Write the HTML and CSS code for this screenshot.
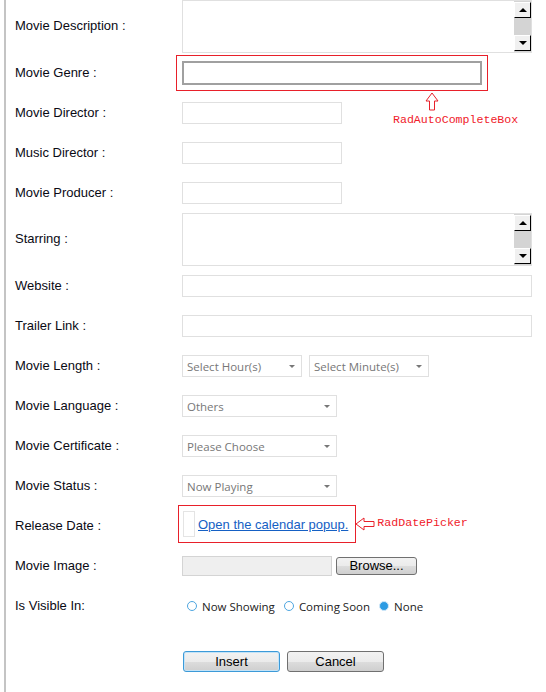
FILE: index.html
```html
<!DOCTYPE html>
<html>
<head>
	<title>Add Movie</title>
	<meta charset="utf-8">
	<link rel="stylesheet" href="styles.css">
</head>
<body>
<div id="container">

	<div class="row row-memo">
		<label>Movie Description :</label>
		<div class="memo">
			<div class="memo-text"></div>
			<div class="vscroll">
				<span class="sbtn up"></span>
				<span class="sbtn down"></span>
			</div>
		</div>
	</div>

	<div class="row">
		<label>Movie Genre :</label>
		<div class="mark mark-genre">
			<input type="text" class="autocomplete">
			<svg class="note-arrow arrow-up" width="14" height="20" viewBox="0 0 14 20">
				<polygon points="7,1 1,9 4.5,9 4.5,18 9.5,18 9.5,9 13,9" fill="#fff" stroke="#e8202a" stroke-width="1"/>
			</svg>
			<span class="note note-genre">RadAutoCompleteBox</span>
		</div>
	</div>

	<div class="row">
		<label>Movie Director :</label>
		<input type="text" class="txt">
	</div>

	<div class="row">
		<label>Music Director :</label>
		<input type="text" class="txt">
	</div>

	<div class="row">
		<label>Movie Producer :</label>
		<input type="text" class="txt">
	</div>

	<div class="row row-memo">
		<label>Starring :</label>
		<div class="memo">
			<div class="memo-text"></div>
			<div class="vscroll">
				<span class="sbtn up"></span>
				<span class="sbtn down"></span>
			</div>
		</div>
	</div>

	<div class="row">
		<label>Website :</label>
		<input type="text" class="txt txt-wide">
	</div>

	<div class="row">
		<label>Trailer Link :</label>
		<input type="text" class="txt txt-wide">
	</div>

	<div class="row">
		<label>Movie Length :</label>
		<div class="combo combo-short"><span>Select Hour(s)</span><i></i></div>
		<div class="combo combo-short"><span>Select Minute(s)</span><i></i></div>
	</div>

	<div class="row">
		<label>Movie Language :</label>
		<div class="combo"><span>Others</span><i></i></div>
	</div>

	<div class="row">
		<label>Movie Certificate :</label>
		<div class="combo"><span>Please Choose</span><i></i></div>
	</div>

	<div class="row">
		<label>Movie Status :</label>
		<div class="combo"><span>Now Playing</span><i></i></div>
	</div>

	<div class="row">
		<label>Release Date :</label>
		<div class="mark mark-date">
			<span class="date-input"></span>
			<a href="#" class="popup-link">Open the calendar popup.</a>
			<svg class="note-arrow arrow-left" width="20" height="14" viewBox="0 0 20 14">
				<polygon points="1,7 9,1 9,4.5 19,4.5 19,9.5 9,9.5 9,13" fill="#fff" stroke="#e8202a" stroke-width="1"/>
			</svg>
			<span class="note note-date">RadDatePicker</span>
		</div>
	</div>

	<div class="row">
		<label>Movie Image :</label>
		<span class="file-box"></span>
		<button class="btn btn-browse">Browse...</button>
	</div>

	<div class="row">
		<label>Is Visible In:</label>
		<div class="radios">
			<span class="opt"><span class="dot"></span>Now Showing</span>
			<span class="opt"><span class="dot"></span>Coming Soon</span>
			<span class="opt"><span class="dot on"></span>None</span>
		</div>
	</div>

	<div id="botones">
		<button class="btn btn-main btn-focus">Insert</button>
		<button class="btn btn-main">Cancel</button>
	</div>

</div>
</body>
</html>
```

FILE: styles.css
```css
body {
	margin: 0;
	background-color: #fff;
	font-family: "Liberation Sans", Arial, sans-serif;
	font-size: 13px;
	color: #000;
}
#container {
	margin-left: 4px;
	border-left: 2px solid #c4c4c4;
	padding-left: 9px;
	min-height: 692px;
	box-sizing: border-box;
}
.row {
	display: flex;
	align-items: center;
	height: 40px;
}
.row > label {
	width: 167px;
	flex: none;
	padding-bottom: 2px;
	color: #0a0a14;
}
.row-memo {
	height: 53px;
}

/* text inputs */
.txt {
	box-sizing: border-box;
	width: 160px;
	height: 22px;
	margin: 0;
	border: 1px solid #e0e0e0;
	padding: 0 4px;
	outline: none;
}
.txt-wide {
	width: 350px;
}

/* multi line box with the old style scrollbar */
.memo {
	box-sizing: border-box;
	width: 350px;
	height: 53px;
	border: 1px solid #e0e0e0;
	display: flex;
}
.memo-text {
	flex: 1;
}
.vscroll {
	width: 17px;
	background-color: #d4d4d4;
	display: flex;
	flex-direction: column;
	justify-content: space-between;
	padding: 1px 0;
}
.sbtn {
	box-sizing: border-box;
	display: flex;
	align-items: center;
	justify-content: center;
	height: 16px;
	background-color: #f0f0f0;
	border-top: 1px solid #fff;
	border-left: 1px solid #fff;
	border-right: 1px solid #000;
	border-bottom: 1px solid #000;
}
.sbtn::after {
	content: "";
	border-left: 4px solid transparent;
	border-right: 4px solid transparent;
}
.sbtn.up::after {
	border-bottom: 4px solid #000;
}
.sbtn.down::after {
	border-top: 4px solid #000;
}

/* red marks with notes */
.mark {
	position: relative;
	border: 1px solid #e8202a;
}
.mark-genre {
	margin-left: -6px;
	padding: 5px;
	display: flex;
}
.autocomplete {
	box-sizing: border-box;
	width: 300px;
	height: 24px;
	margin: 0;
	border: 2px solid #a0a0a0;
	outline: none;
}
.note-arrow {
	position: absolute;
}
.arrow-up {
	left: 248px;
	top: 36px;
}
.note {
	position: absolute;
	font-family: "Liberation Mono", "DejaVu Sans Mono", monospace;
	font-size: 11.6px;
	color: #f0202a;
	white-space: nowrap;
}
.note-genre {
	left: 216px;
	top: 57px;
}
.mark-date {
	margin-left: -4px;
	margin-bottom: 4px;
	padding: 5px 7px 5px 4px;
	display: flex;
	align-items: center;
}
.date-input {
	box-sizing: border-box;
	width: 12px;
	height: 26px;
	border: 1px solid #e4e4e4;
}
.popup-link {
	margin-left: 3px;
	color: #1560c4;
	text-decoration: underline;
}
.arrow-left {
	left: 100%;
	top: 11px;
}
.note-date {
	left: calc(100% + 22px);
	top: 10px;
}

/* drop downs */
.combo {
	box-sizing: border-box;
	width: 155px;
	height: 22px;
	border: 1px solid #e0e0e0;
	display: flex;
	align-items: center;
	justify-content: space-between;
	padding: 0 6px 0 4px;
	font-family: "Open Sans", sans-serif;
	font-size: 11.5px;
	color: #777;
}
.combo-short {
	width: 120px;
	margin-right: 7px;
}
.combo i {
	border-left: 3px solid transparent;
	border-right: 3px solid transparent;
	border-top: 3px solid #777;
}

/* file upload */
.file-box {
	box-sizing: border-box;
	width: 150px;
	height: 20px;
	background-color: #efefef;
	border: 1px solid #d4d4d4;
}

/* radio buttons */
.radios {
	display: flex;
	padding-left: 5px;
	font-family: "Open Sans", sans-serif;
	font-size: 11.5px;
	color: #222;
}
.opt {
	display: flex;
	align-items: center;
	margin-right: 9px;
}
.dot {
	box-sizing: border-box;
	width: 10px;
	height: 10px;
	margin-right: 5px;
	border: 1.5px solid #4ea6e0;
	border-radius: 50%;
}
.dot.on {
	background-color: #2c9be3;
	border-color: #cfe7f8;
}

/* buttons */
.btn {
	box-sizing: border-box;
	margin: 0;
	padding: 0;
	border: 1px solid #707070;
	border-radius: 3px;
	background: linear-gradient(#f2f2f2, #ebebeb 50%, #dddddd 50%, #cfcfcf);
	font-family: "Liberation Sans", Arial, sans-serif;
	font-size: 13px;
	color: #000;
}
.btn-browse {
	width: 81px;
	height: 18px;
	margin-left: 4px;
	line-height: 14px;
}
#botones {
	display: flex;
	padding-top: 25px;
	padding-left: 168px;
}
.btn-main {
	width: 97px;
	height: 21px;
	margin-right: 7px;
}
.btn-focus {
	border-color: #3c9ad8;
	box-shadow: inset 0 0 0 1px #c4e3f7;
}
```
